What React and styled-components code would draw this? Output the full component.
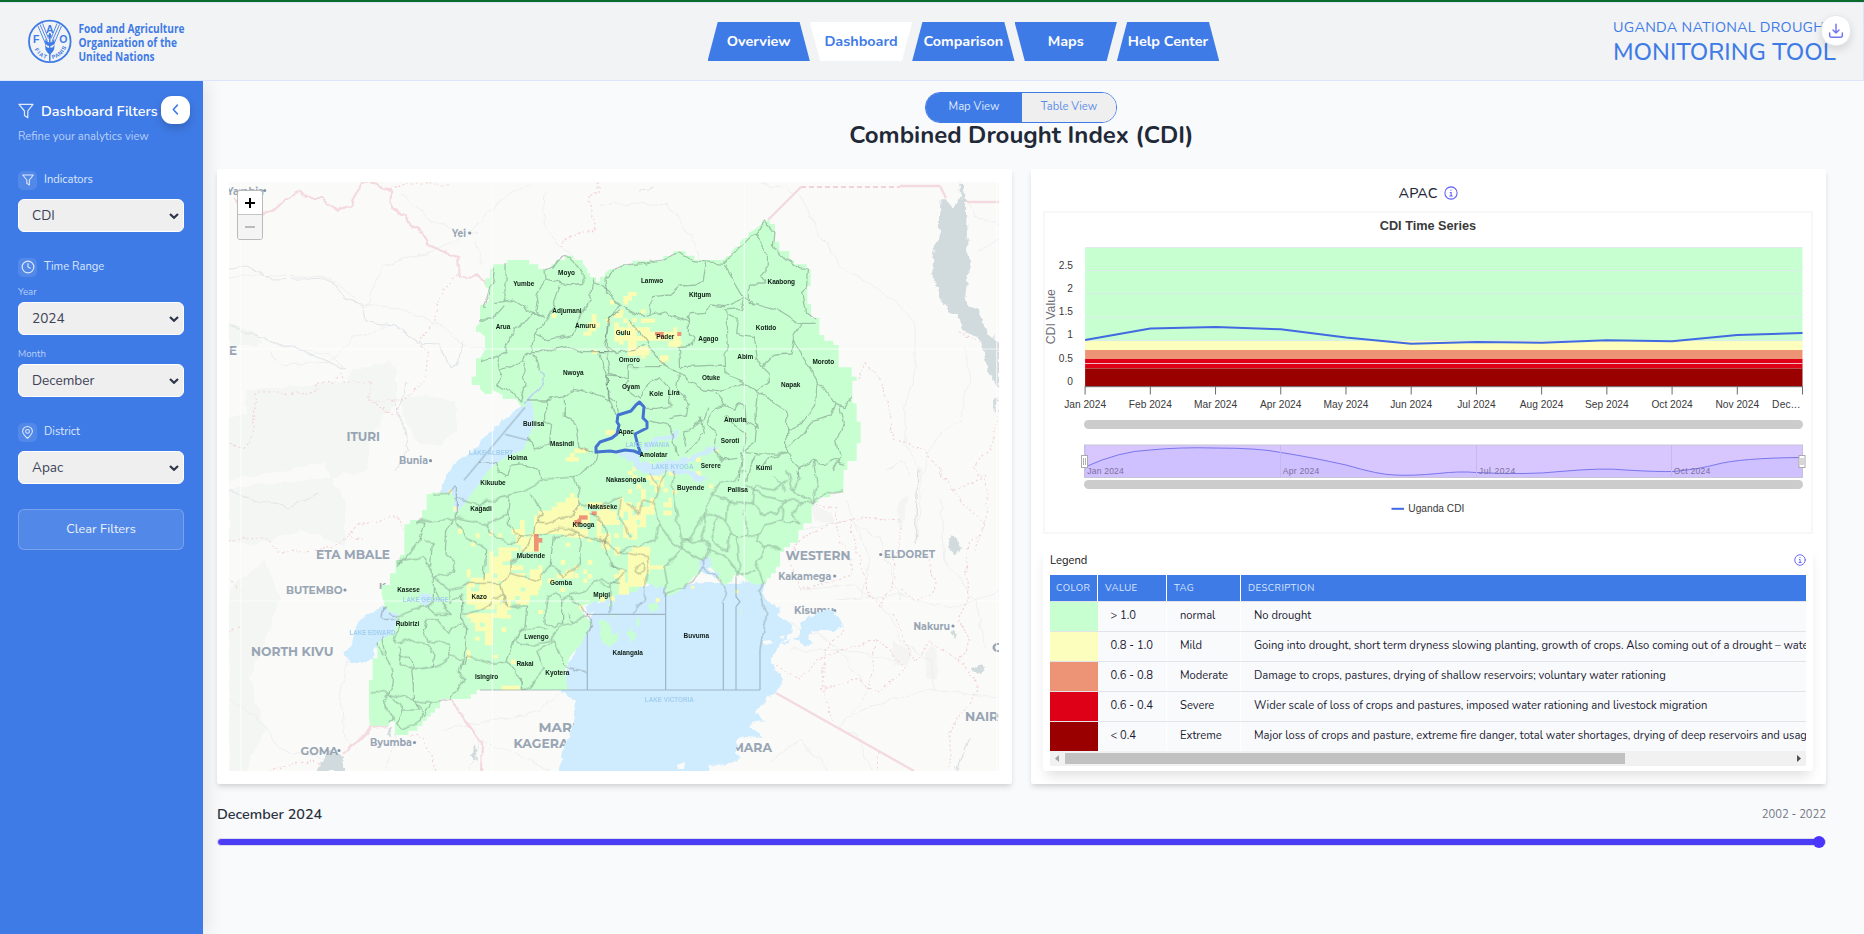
import React from "react";
import styled, { createGlobalStyle, css } from "styled-components";

const BLUE = "#3f7be6";
const UI = '"Nunito", "Lato", sans-serif';

const Global = createGlobalStyle`
  * { box-sizing: border-box; }
  body { margin: 0; background: #f9fafc; overflow: hidden; font-family: ${UI}; color: #1f2937; }
  button { font-family: inherit; border: 0; padding: 0; }
`;

const Page = styled.div`
  height: 934px;
  display: flex;
  flex-direction: column;
  border-top: 2px solid #0b6b2f;
`;

/* ---------- header ---------- */
const Header = styled.header`
  height: 79px;
  flex: none;
  display: flex;
  align-items: center;
  background: #f2f3f5;
  border: 1px solid #dbe5fb;
  border-left: 0;
  padding-left: 25px;
  position: relative;
`;
const Nav = styled.nav`
  display: flex;
  margin-left: 486.5px;
`;
const Tab = styled.button`
  width: 102.35px;
  height: 39px;
  padding-bottom: 2px;
  font-size: 14.4px;
  font-weight: 700;
  white-space: nowrap;
  color: ${(p) => (p.$active ? BLUE : "#fff")};
  background: ${(p) => (p.$active ? "#fff" : BLUE)};
  clip-path: ${(p) =>
    p.$flip
      ? "polygon(0 0, 100% 0, 90% 100%, 10% 100%)"
      : "polygon(10% 0, 90% 0, 100% 100%, 0 100%)"};
`;
const Brand = styled.div`
  margin-left: auto;
  width: 250px;
  color: ${BLUE};
  white-space: nowrap;
`;
const BrandSmall = styled.div`
  font-size: 14.4px;
  line-height: 20px;
  letter-spacing: 0.25px;
`;
const BrandBig = styled.div`
  font-size: 24px;
  line-height: 30px;
  font-weight: 540;
`;
const Download = styled.button`
  position: absolute;
  right: 12px;
  top: 12px;
  width: 30px;
  height: 31px;
  border-radius: 14px;
  border: 1px solid #e5e7eb;
  background: #fff;
  color: #7376f1;
  box-shadow: 0 4px 8px rgba(0, 0, 0, 0.12);
  display: grid;
  place-items: center;
`;

/* ---------- sidebar ---------- */
const Body = styled.div`
  flex: 1;
  display: flex;
  min-height: 0;
`;
const Sidebar = styled.aside`
  width: 203px;
  flex: none;
  background: ${BLUE};
  padding: 14px 19px 0 18px;
  color: #fff;
  box-shadow: 4px 0 18px rgba(0, 0, 0, 0.09);
`;
const SideHead = styled.div`
  display: flex;
  align-items: center;
  height: 29px;
  font-size: 14.4px;
  font-weight: 600;
  white-space: nowrap;
  margin-right: -6px;
  > svg { flex: none; margin: 3px 7px 0 0; opacity: 0.85; }
`;
const HeadText = styled.span`
  width: 120px;
  padding-top: 3px;
  letter-spacing: -0.02px;
`;
const Collapse = styled.button`
  width: 29px;
  height: 28px;
  flex: none;
  border-radius: 11px;
  background: #fff;
  color: ${BLUE};
  display: grid;
  place-items: center;
  box-shadow: 0 4px 8px rgba(0, 0, 0, 0.18);
`;
const SideSub = styled.div`
  font-size: 11.2px;
  line-height: 16px;
  margin-top: 5px;
  color: #b9d0f8;
`;
const Section = styled.div`
  display: flex;
  align-items: center;
  height: 20px;
  margin-top: ${(p) => p.$top}px;
  font-size: 11.2px;
  color: #dce8fd;
`;
const SectionText = styled.span`
  padding-bottom: 2px;
`;
const SectionIcon = styled.span`
  width: 19px;
  height: 19px;
  border-radius: 5px;
  background: rgba(255, 255, 255, 0.1);
  display: grid;
  place-items: center;
  margin-right: 7px;
`;
const FieldLabel = styled.div`
  font-size: 9.6px;
  line-height: 12px;
  margin-top: ${(p) => p.$top}px;
  color: #b9d0f8;
`;
const Select = styled.button`
  display: flex;
  align-items: center;
  justify-content: space-between;
  width: 166px;
  height: 33px;
  margin-top: ${(p) => p.$top}px;
  padding: 0 4px 0 13px;
  border: 1px solid #fff;
  border-radius: 6px;
  background: #efefef;
  color: #3b4256;
  font-size: 13.6px;
`;
const Clear = styled.button`
  display: block;
  width: 166px;
  height: 41px;
  margin-top: 25px;
  border-radius: 6px;
  border: 1px solid rgba(255, 255, 255, 0.22);
  background: rgba(255, 255, 255, 0.1);
  color: #edf3fe;
  font-size: 12.8px;
  padding-bottom: 1px;
`;

/* ---------- main ---------- */
const Main = styled.main`
  flex: 1;
  min-width: 0;
  padding: 11px 38px 0 14px;
`;
const Toggle = styled.div`
  display: flex;
  width: 192px;
  height: 31px;
  margin: 0 auto 0 708px;
  border: 1px solid ${BLUE};
  border-radius: 15px;
  overflow: hidden;
`;
const ToggleItem = styled.button`
  width: ${(p) => p.$w}px;
  font-size: 11.2px;
  padding-bottom: 3px;
  color: ${(p) => (p.$on ? "#dfe9fc" : "#5c8ee8")};
  background: ${(p) => (p.$on ? BLUE : "#efefef")};
`;
const Title = styled.h1`
  margin: -4px 0 0;
  text-align: center;
  font-size: 24px;
  line-height: 32px;
  font-weight: 700;
  color: #1f2937;
`;
const Cards = styled.div`
  display: flex;
  gap: 19px;
  margin-top: 18px;
`;
const Card = styled.section`
  width: 795px;
  height: 615px;
  background: #fff;
  border-radius: 2px;
  padding: 12px;
  box-shadow: 0 4px 6px -1px rgba(0, 0, 0, 0.13), 0 2px 4px -1px rgba(0, 0, 0, 0.06);
`;
const MapFrame = styled.div`
  width: 770px;
  height: 589px;
  margin-top: 1px;
  position: relative;
  svg.map { display: block; }
`;
const Zoom = styled.div`
  position: absolute;
  left: 8px;
  top: 8px;
  width: 26px;
  height: 50px;
  border: 1px solid #bababa;
  border-radius: 3px;
  overflow: hidden;
`;
const ZoomKey = styled.div`
  height: 24px;
  display: grid;
  place-items: center;
  background: ${(p) => (p.$off ? "#f4f4f4" : "#fff")};
  color: ${(p) => (p.$off ? "#bbb" : "#000")};
  ${(p) => !p.$off && css`border-bottom: 1px solid #c4c4c4;`}
`;
const PanelTitle = styled.div`
  height: 30px;
  display: flex;
  align-items: center;
  justify-content: center;
  gap: 7px;
  font-size: 14.4px;
  font-weight: 530;
  color: #1f2937;
  padding-bottom: 6px;
`;
const ChartBox = styled.div`
  width: 770px;
  height: 323px;
  border: 2px solid #f7f7f8;
  svg { display: block; margin: -2px; }
`;
const Legend = styled.div`
  width: 770px;
  height: 225px;
  margin-top: 12px;
  padding: 4px 7px 0;
  background: #fff;
  border-radius: 3px;
  box-shadow: 0 8px 12px -3px rgba(0, 0, 0, 0.12);
`;
const LegendHead = styled.div`
  height: 25px;
  display: flex;
  align-items: center;
  justify-content: space-between;
  padding-bottom: 5px;
  font-size: 11.2px;
  color: #111;
`;
const TableWrap = styled.div`
  width: 756px;
  overflow: hidden;
`;
const Row = styled.div`
  display: grid;
  grid-template-columns: 48px 69px 74px 565px;
  height: ${(p) => p.$h}px;
  border-bottom: ${(p) => (p.$last ? 0 : 1)}px solid #e2e4e8;
`;
const HeadCell = styled.div`
  background: ${BLUE};
  color: #d9e6fc;
  font-size: 9.6px;
  letter-spacing: 0.4px;
  display: flex;
  align-items: center;
  padding: 0 0 1px ${(p) => (p.$first ? 6 : 7)}px;
  border-right: ${(p) => (p.$end ? 0 : 1)}px solid #fff;
`;
const Cell = styled.div`
  background: #f9fafc;
  display: flex;
  align-items: center;
  padding: 0 0 2px ${(p) => p.$pad || 13}px;
  font-size: 11.2px;
  white-space: nowrap;
  color: #1b1b33;
  border-right: ${(p) => (p.$end ? 0 : 1)}px solid #fff;
`;
const Swatch = styled.div`
  background: ${(p) => p.$c};
`;
const Scroll = styled.div`
  height: 15px;
  background: #f1f1f1;
  display: flex;
  align-items: center;
  justify-content: space-between;
  padding: 0 5px;
`;
const Thumb = styled.div`
  width: 560px;
  height: 11px;
  background: #c1c1c1;
  margin: 0 auto 0 6px;
`;
const Timeline = styled.div`
  display: flex;
  justify-content: space-between;
  align-items: center;
  margin: 19px 0 0;
  height: 22px;
  font-size: 14.4px;
  font-weight: 600;
  color: #2a3240;
`;
const Range = styled.span`
  font-size: 11.2px;
  font-weight: 400;
  color: #6f7683;
`;
const Track = styled.div`
  margin: 13px 0 0;
  height: 8px;
  border: 1px solid #dcdce8;
  border-radius: 4px;
  background: #4a3df5;
  display: flex;
  align-items: center;
  justify-content: flex-end;
`;
const Knob = styled.div`
  width: 12px;
  height: 12px;
  flex: none;
  border-radius: 50%;
  background: #4a36ff;
`;

/* ---------- icons ---------- */
const Svg = ({ s = 16, w = 1.7, children, h }) => (
  <svg width={s} height={h || s} viewBox="0 0 24 24" fill="none" stroke="currentColor" strokeWidth={w} strokeLinecap="round" strokeLinejoin="round">
    {children}
  </svg>
);
const Funnel = ({ s, w }) => (
  <Svg s={s} w={w}><path d="M1.5 2h21l-7.8 10v10l-5-3.2V12z" /></Svg>
);
const Clock = () => (
  <Svg s={14} w={2}><circle cx="12" cy="12" r="10" /><path d="M12 6v6l4 2" /></Svg>
);
const Pin = () => (
  <Svg s={13} w={2}><path d="M12 23C7 18 3 14 3 10a9 9 0 0 1 18 0c0 4-4 8-9 13z" /><circle cx="12" cy="10" r="3.5" /></Svg>
);
const Info = ({ s = 14 }) => (
  <svg width={s} height={s} viewBox="0 0 24 24" fill="none" stroke="#5b5cf0" strokeWidth="1.8" strokeLinecap="round">
    <circle cx="12" cy="12" r="10.5" /><path d="M10.8 11h1.4v6M10 17h4.200M12 7v.4" />
  </svg>
);
const Chevron = () => (
  <svg width="10" height="6" viewBox="0 0 10 6" fill="none" stroke="#30364a" strokeWidth="2.2"><path d="M1 1l4 3.8L9 1" /></svg>
);

const Logo = () => (
  <svg width="196" height="50" viewBox="25 17 196 50" fill={BLUE}>
    <circle cx="49.8" cy="41.4" r="20.8" fill="none" stroke={BLUE} strokeWidth="1.8" />
    <g stroke={BLUE} strokeWidth="0.9" fill="none">
      <path d="M38 26l8 19M40 24.5l7.5 17M42.5 23.5l6 15M61.500 26l-8 19M59.500 24.500l-7.500 17M57 23.500l-6 15" />
      <path d="M49.800 33v28" strokeWidth="1.4" />
    </g>
    <path d="M49.800 33l2 3-2 2.500-2-2.500zM45.500 38.500q1 4 4.300 4t4.300-4l.5 4q-1.500 3.500-4.800 3.500t-4.800-3.500zM45 44.500q1.500 3.500 4.800 3.500t4.800-3.500l-.5 5q-1.300 3-4.300 5.500-3-2.500-4.300-5.500z" />
    <g fontFamily='"Liberation Sans", sans-serif' fontWeight="700" fontSize="10.500" textAnchor="middle">
      <text x="36.300" y="42.500">F</text><text x="49.800" y="32.500">A</text><text x="63.300" y="42.500">O</text>
    </g>
    <g fontFamily='"Liberation Sans", sans-serif' fontSize="5.500" fontWeight="700" textAnchor="middle">
      <text transform="translate(35.500 51) rotate(55)">F</text>
      <text transform="translate(37.500 53.800) rotate(46)">I</text>
      <text transform="translate(40.300 56.300) rotate(35)">A</text>
      <text transform="translate(44.300 58.300) rotate(20)">T</text>
      <text transform="translate(54.300 58.500) rotate(-17)">P</text>
      <text transform="translate(58 57) rotate(-30)">A</text>
      <text transform="translate(61.500 54.500) rotate(-42)">N</text>
      <text transform="translate(63.800 51.800) rotate(-52)">I</text>
      <text transform="translate(65.500 49) rotate(-62)">S</text>
    </g>
    <g fontFamily='"Open Sans", "Noto Sans", sans-serif' fontWeight="700" fontSize="12.200">
      <text x="78.500" y="33" textLength="106" lengthAdjust="spacingAndGlyphs">Food and Agriculture</text>
      <text x="78.500" y="47" textLength="98.500" lengthAdjust="spacingAndGlyphs">Organization of the</text>
      <text x="78.500" y="61" textLength="76" lengthAdjust="spacingAndGlyphs">United Nations</text>
    </g>
  </svg>
);

/* ---------- chart ---------- */
const X0 = 1085.1, DX = 65.22;
const months = ["Jan", "Feb", "Mar", "Apr", "May", "Jun", "Jul", "Aug", "Sep", "Oct", "Nov"];
const cdi = [340, 328.5, 327, 329.3, 337.6, 343.7, 342, 342.7, 340.3, 341.3, 335, 333.1];
const linePts = cdi.map((y, i) => `${X0 + i * DX},${y}`).join(" ");
const bands = [["#c7ffd1", 247.5, 341], ["#fbfebd", 341, 350], ["#ee9476", 350, 359], ["#de0017", 359, 368.500], ["#9a0000", 368.500, 386.500]];
const trend = "M1085 467Q1120 451 1150 450Q1180 447 1215 448Q1260 448 1281 452.500Q1310 457 1346 465Q1380 475 1395 475Q1412 476 1438 473.500Q1460 471 1476 472.500Q1530 475 1560 471.500Q1605 467.500 1625 470Q1660 472 1673 471.500Q1700 469 1716 464.500Q1740 458 1802 457.500";

const Chart = () => (
  <svg width="770" height="323" viewBox="1043 211 770 323" fontFamily='"Liberation Sans", Arial, sans-serif' fontSize="10.200" fill="#3a3a3a">
    <text x="1428" y="230" textAnchor="middle" fontSize="12.700" fontWeight="700">CDI Time Series</text>
    {bands.map(([c, a, b]) => <rect key={c} x={X0} width="717.400" y={a} height={b - a} fill={c} />)}
    {[247.5, 270.5, 293.7, 317.2, 340.5].map((y) => <path key={y} d={`M${X0} ${y}H1802.500`} stroke="#e0e6f1" strokeOpacity=".75" />)}
    <path d="M1085 363.500H1802.500" stroke="#f3b9c0" />
    <path d="M1085 368.500H1802.500" stroke="#b4504c" />
    <path d="M1085 386.700H1802.500" stroke="#6b6b70" />
    {Array.from({ length: 12 }, (_, i) => <path key={i} d={`M${X0 + i * DX} 386v8.500`} stroke="#6b6b70" />)}
    {["2.5", "2", "1.5", "1", "0.5", "0"].map((t, i) => <text key={t} x="1073" y={268.800 + i * 23.200} textAnchor="end">{t}</text>)}
    {months.map((m, i) => <text key={m} x={X0 + i * DX} y="407.700" textAnchor="middle">{m} 2024</text>)}
    <text x="1772" y="407.700" textLength="28">Dec...</text>
    <text transform="translate(1054.800 316.700) rotate(-90)" textAnchor="middle" fontSize="12.300" fill="#6e7079">CDI Value</text>
    <polyline points={linePts} fill="none" stroke="#4169e1" strokeWidth="2" strokeLinejoin="round" />
    <rect x="1084" y="420" width="719" height="9" rx="4.500" fill="#ccc" />
    <rect x="1084.500" y="445" width="718" height="32.500" fill="#d8c7ff" stroke="#c8c3d6" />
    <path d={trend + "V477H1085Z"} fill="#b9aeff" fillOpacity=".3" />
    <path d={trend} fill="none" stroke="#7a76ee" />
    {[["Jan", 1085], ["Apr", 1280.500], ["Jul", 1476.500], ["Oct", 1671.500]].map(([m, x]) => (
      <g key={m}>
        <path d={`M${x} 445v32`} stroke="#c6b8ec" />
        <text x={x + 2.300} y="474" fontSize="8.600" fill="#7d6f9c" textLength="36.500">{m} 2024</text>
      </g>
    ))}
    {[1084.500, 1802].map((x) => (
      <g key={x}>
        <rect x={x - 3} y="455.500" width="6" height="12" fill="#fff" stroke="#aaa" />
        <path d={`M${x - 1} 458v7M${x + 1} 458v7`} stroke="#999" strokeWidth=".8" />
      </g>
    ))}
    <rect x="1084" y="480" width="719" height="9" rx="4.500" fill="#ccc" />
    <path d="M1391.500 508.800h12.500" stroke="#4169e1" strokeWidth="2" />
    <text x="1408.300" y="512" fontSize="10.200">Uganda CDI</text>
  </svg>
);

/* ---------- map ----------
   Each quarter of the map is drawn in its own grid of thirds of a pixel. */
const Q = ({ x, y, children, ...rest }) => <g transform={`translate(${x} ${y}) scale(.33333)`} {...rest}>{children}</g>;

const greens = [
  [220, 170, "M1200 297L1170 297V310H1156V335H1128V322H1110V310H1102V297L1088 283V270H1060V257H1035V270H1008V283H995V297H955V283H928V270H862V283H820V297H810V325H796V350L806 356V395L790 405H780V458L768 470V485H778L795 500V540L780 565H768V620H755V645H780V658L796 672H818V660L848 675V687H888L900 705L915 712L925 690L935 700L941 730V770L925 800L918 820L910 840L870 855L830 880L800 905L792 930H1200Z"],
  [600, 170, "M0 320H15V310L30 298H60V285H97V272H190V258H220V244H257V257H283V270H370L382 258H395V243L408 230H420V215L433 203H445V190L465 178L485 163V152H510V162H525V215H538V243H568V270H582V283H620V297H632V348H622V402H633V443H658V495H673V512H700V525H716V592H755V620H770V632H757V700H770V755H782V820H770V873H742V900H730V932H0Z"],
  [220, 470, "M815 0L790 20L775 45L755 70L735 100L712 125H700V110L705 85L690 68H635V72H620V120H606V150H570V163H553V255H540V270H527V310H510V345H485V372L495 410L510 425L535 432L530 460L520 490L490 505L472 520V565H458V630H447V740L450 767H508V755H525V795H565V782H592V768H607V752H620V740H632V728H645V715H660V687H752V673H770V660H1043L1035 600L1050 560L1085 520L1110 470L1115 455L1095 440L1085 420L1090 405L1120 400L1170 385L1200 372V-4H815Z"],
  [600, 470, "M0 -4H730V68H690V82H655V97H640V110H635V160H610V180H595V218H570V232H552V245H540V290H527V310H513V325H500V338L470 345L445 335L425 315H402L395 335L370 345L340 300L330 290L312 300L285 318L240 362L210 378L197 372L195 350L170 362L160 345L140 340L125 345L110 365L60 370L30 385L0 400Z"],
];
const borders = [
  [220, 170, "M858 283V390L850 398L820 400M975 298L978 330L955 370L948 425L972 440M978 300L1000 290L1020 262L1050 265L1090 310L1088 340L1050 345L1020 340L978 330M820 290L815 340L805 380L790 410M850 398L880 390L910 408L920 425L970 438M780 450L815 450L850 410M940 430L920 455L885 470L880 490L860 520L855 545L830 560L780 575M1020 350L1000 410L980 445L945 490L935 510L932 545L970 545L1040 530L1085 545L1160 545M945 490L985 512L1060 492L1085 440L1112 385L1118 325M1118 335L1150 345L1170 370L1200 400M1200 425L1170 440L1165 490L1155 530L1165 545M932 545L905 570L875 590L835 600L830 560M835 600L850 620L835 650L880 670L905 700M935 550L955 580L958 600M912 570L908 600L915 640L905 700M1140 550L1150 590L1165 615L1200 620M1165 615V680L1190 700L1195 730M925 690L975 690L1035 680L1060 655L1120 665L1170 690M977 690V750L995 765L988 820L940 840L925 800M1033 675V745L1070 765L1080 830L1128 852M780 877L830 880L835 905L860 915L870 890L900 885L930 890L960 900L965 930M1128 852L1120 880L1090 900L1060 925"],
  [600, 170, "M15 320L75 285L130 280L185 270L240 245L280 272L370 280L465 188L495 155M15 320L20 370L60 405L130 440L155 435L205 425L225 440L265 455L270 435L310 430L325 405L380 410L430 385L370 285M320 280L310 330L290 345L240 348L210 375L158 380L150 435M465 188L500 250L498 300L480 320L495 345H448V400L475 402M430 385L475 405L545 425L600 460H650M495 155L525 190L520 230L545 260L570 275L590 290L622 300L620 345L608 370L620 430L645 450M430 390L425 415L380 420L385 530L375 560L378 615L430 635M60 405L25 450L22 530L50 548L138 530M90 448L182 575L245 610M265 440V490L285 500L280 525L238 530L242 590L378 585M385 440L415 448L410 490L460 500L470 570L505 605V640L465 660L430 635M490 585L520 555L570 552L580 508L605 460M580 510L610 560L655 635L650 700L605 760L560 780V720L430 640M655 640L680 660L705 700L735 710L755 680M705 700L690 740L630 760L600 800L560 830V780M720 710L730 760L710 810L720 860L700 900M560 830V850L475 848L430 845M425 850L420 900L418 930M475 848L450 890L440 930M0 545H50M20 550L30 610L85 630L85 590H182M23 615L28 690L50 740M85 630L75 650L120 685L145 640L180 620M182 580L240 605L270 635L310 660L360 665L430 640M180 620L205 650L210 710L170 715L132 715M235 610L230 650L265 700L260 735L205 740M350 670L375 700L345 710L320 760L350 790L345 840M320 710L310 750L255 790L250 830M375 700L400 725L415 700L435 710L438 755L470 770L465 820L430 845L440 790L405 770L375 740M475 670L468 730L475 780M145 750L200 760L220 800L230 860M300 740L310 790L260 850M345 840L370 870L415 865M480 900L510 860L560 850L600 890L590 930M600 890L640 870L670 890L700 870L735 880M640 870L650 930"],
  [220, 470, "M712 50V145L600 155L590 165M712 50L680 70L640 72M712 80L780 110L800 90L862 80M712 145L800 165L860 135L865 75L910 65L975 30L1060 25L1075 50L1080 100M865 130V160L890 190L945 200M930 70L970 130L945 160L940 200M800 165L820 200L890 220L905 190M700 145L680 190L675 250L710 280L700 310L640 320M710 150L740 200L780 225L800 240L795 330M590 160L615 160L600 210L550 270L530 280M550 270L610 262L640 300V400L620 412M610 210L640 215L635 290M640 320L690 360L730 350L740 340H845M640 350L660 390L690 430L640 430L620 412L580 420L530 440L510 430M690 360L690 400L725 370V450L740 480L730 590M730 430L790 420L820 400V385L850 380L860 405M940 200L905 250L870 280V310L840 345L850 395L860 405L920 415L915 470L880 510L860 575L820 580L740 560L735 590M870 310L950 330L990 290L1000 200L1080 190M945 155L1000 160L1060 130L1080 100L1110 110L1200 85M950 195L1030 170L1080 190V230L1085 280L1030 320L990 290M1080 200L1160 210L1155 260L1200 300M1110 130L1150 160L1160 210M990 380L978 400V460L1000 475L1025 460V390L1005 372L990 380M1050 375L1100 360L1145 330L1200 340M1025 390L1050 380L1090 420L1100 433M1025 465L1060 460L1100 435L1118 470L1102 490M880 510L930 525L990 510L1025 470M880 510L910 480L980 475M950 545L1000 510L1020 550L1035 585L1100 610M950 545L970 600L930 650L905 660L900 620L860 575M482 448H535L540 470L520 500L530 520M485 500L495 550L520 610L510 670L455 662M470 520L490 550M530 520L570 510L620 520L645 550L640 590L580 600L575 560L545 555L540 530M545 555L540 580L575 600L580 640L580 690L510 670M575 600L650 590L690 560L685 520L620 510L610 480L620 450L650 445L690 490L725 460M690 560L730 570L720 610L735 630L700 670L690 690L630 700L610 740M510 670L550 720L600 720L580 690M510 670L490 700L520 745L510 760M550 720L530 760L545 780L600 755L610 720L580 690L630 700M490 420L495 410M482 448L490 410M553 265L530 290M904 660V620M1060 460L1040 430"],
  [600, 470, "M200 0L180 40L165 100L175 160L165 210L55 245M150 10L175 60M225 0L215 50L225 110L245 210L265 210L320 125L330 70L360 40L400 30L435 0M320 125L310 180L300 210L245 215M320 125L350 145L380 155L385 90L400 95L330 70M350 145L335 210L380 245L385 190L380 155M400 95L460 100L465 50L520 60L560 30M435 40L460 60L500 80L545 90L600 95L640 98L650 30M460 100L480 130L530 130L560 90M435 100L440 200L410 200L385 190M440 200L475 190L500 165L545 150L550 110M475 190L470 215L495 235H540M550 155L600 160L575 130L600 95M495 235L470 280L490 340L478 365L497 430L480 540M408 200L415 240L420 300L408 320M245 215L250 240L210 280L195 290L205 340L190 365L197 375L250 355L308 298L340 310L375 350L370 400M308 298V270L335 230L300 210M308 270L250 240L225 225L175 160M97 430L130 390L132 340L145 300L142 260L55 245L0 200M60 90L55 130L90 200M80 100L115 130L125 90L170 100M30 280L75 300L60 330L30 340V432M0 340L30 350M110 290L125 285L135 300L125 315L105 305ZM560 0L575 60L640 95L655 80L730 60M590 0L600 30L575 60M560 60L520 20M330 240L380 260L420 310L470 305"],
];
/* boundaries that run over open water are ruled straight */
const lakeBorders = [
  [220, 170, "M855 793L930 812M915 712L732 930"],
  [220, 470, "M1100 433H1140M1102 490V660M780 660H1140"],
  [600, 470, "M0 433H197M197 375V660M370 400V660M408 320V380L420 395L408 410V660M480 540V660M0 660H480"],
];
const yellow = [
  [220, 170, "995,430,14,14 1115,432,14,28 1103,458,26,26 1090,485,25,12 1128,458,12,14 1115,540,16,12 1170,390,12,12 1158,444,10,14 1183,430,17,14 1183,458,14,12 1183,485,17,30 1158,780,26,15 1063,835,40,14 1050,849,14,26 1037,862,14,12 1063,862,14,12"],
  [600, 170, "84,366,26,12 70,378,26,14 70,390,14,14 30,392,13,12 57,418,14,12 43,430,26,14 20,445,12,14 70,445,13,14 97,444,13,12 84,458,14,12 123,418,14,12 123,446,42,13 43,458,14,14 43,472,100,40 57,512,14,12 84,498,26,60 98,485,95,27 110,530,38,26 123,556,14,10 138,472,12,40 165,485,60,25 190,498,52,14 220,472,12,60 205,512,40,18 180,556,26,18 180,570,12,10 43,472,26,14 17,780,25,14 97,890,12,14 84,903,14,12 288,862,14,14 288,903,14,14 138,876,16,10 205,903,20,14 138,916,50,14 260,862,18,12 345,835,10,12"],
  [220, 470, "1050,70,14,25 1037,83,40,28 1010,97,67,14 995,110,95,40 955,122,130,30 942,136,110,56 900,150,14,44 875,177,40,16 888,190,60,35 1030,150,50,50 1070,122,40,40 1100,97,50,14 1130,122,60,42 1145,110,24,14 1158,150,42,14 1130,164,14,44 1145,205,26,30 1158,190,14,40 1183,230,17,26 1050,177,54,26 902,220,58,25 835,232,60,12 835,244,40,30 820,260,50,12 808,272,40,26 820,286,90,14 808,298,65,34 795,310,40,28 740,298,12,25 752,323,60,16 740,338,100,66 780,325,25,12 845,286,28,160 840,345,90,46 860,310,100,50 900,340,55,36 885,325,50,14 930,298,36,50 888,390,40,14 765,404,60,14 740,430,115,14 752,430,55,28 765,444,55,40 830,404,28,40 795,484,24,42 765,500,14,12 845,472,14,14 740,541,12,26 820,555,14,10 873,568,14,14 845,647,55,13 835,190,10,14 714,177,12,14 767,190,12,14 808,183,10,14 753,218,12,12 808,244,12,50 955,286,12,14 983,325,20,14 1010,312,50,14 1037,298,26,14 1063,310,12,14 1090,298,12,14 1063,286,14,12 1103,270,14,14 1103,312,14,14 1037,218,14,12 1077,192,14,14 1090,325,12,14 1022,270,14,14 1022,352,14,14 955,420,14,12 1170,380,14,14 1078,405,10,14 700,110,10,12 688,58,8,12 1103,205,14,10"],
  [600, 470, "57,83,14,60 70,97,26,28 84,122,54,50 97,110,66,24 110,97,14,14 123,57,14,40 150,15,14,30 164,40,14,28 177,26,14,26 190,55,14,12 150,83,14,50 97,15,14,12 84,57,12,14 110,43,14,14 0,122,14,42 14,150,44,14 0,190,30,28 14,205,16,36 70,150,40,54 70,177,14,26 84,164,28,45 84,244,66,56 97,230,54,20 138,260,12,50 150,286,40,12 110,298,28,40 97,310,40,35 84,300,40,50 43,312,14,14 57,298,18,50 57,338,40,12 123,338,10,12 43,190,14,14 0,380,14,16 30,380,14,14 190,97,24,14 205,83,10,30 190,122,26,14 218,60,14,12 273,15,28,10 180,0,14,12 327,43,12,12 273,348,10,8 167,384,12,12 405,360,10,10 57,350,30,24"],
];
const holes = [
  [600, 170, "57,485,14,13 110,485,14,13 150,458,14,27 205,498,14,14"],
  [220, 470, "752,352,26,12 765,340,14,10 885,378,14,12 915,190,14,12 820,310,12,14 862,420,12,14 902,352,14,12 915,312,14,14 780,458,14,12 875,244,12,14"],
  [600, 470, "97,122,12,14 84,190,14,12 110,150,10,14"],
];
const orange = [
  [600, 170, "165,486,26,10 177,496,14,6 232,486,12,12"],
  [220, 470, "942,192,14,52 955,204,12,14 1077,136,26,13 1063,150,14,14 1115,124,15,11 1072,146,12,16"],
];
const cells = (groups, fill) => groups.map(([x, y, list]) => (
  <Q key={x + "-" + y} x={x} y={y} fill={fill}>
    {list.split(" ").map((r, i) => {
      const [a, b, w, h] = r.split(",");
      return <rect key={i} x={a} y={b} width={w} height={h} />;
    })}
  </Q>
));

const districts = [
  ["Yumbe", 523.7, 284], ["Moyo", 566.500, 273], ["Adjumani", 567, 311], ["Arua", 503, 327], ["Amuru", 585.300, 326],
  ["Nwoya", 573.300, 373], ["Buliisa", 533.500, 424], ["Masindi", 562, 444], ["Hoima", 517.500, 458],
  ["Lamwo", 652, 281], ["Kitgum", 700, 295], ["Kaabong", 781.300, 282], ["Kotido", 766, 328], ["Agago", 708.300, 339],
  ["Gulu", 623, 333], ["Pader", 665.300, 337], ["Abim", 745.300, 357], ["Moroto", 823.300, 362], ["Omoro", 629.300, 360],
  ["Otuke", 711, 378], ["Napak", 790.700, 385], ["Oyam", 631, 387], ["Kole", 656.300, 394], ["Lira", 673.700, 393],
  ["Amuria", 735, 420], ["Apac", 626, 432], ["Soroti", 730, 441], ["Amolatar", 653.500, 455], ["Serere", 710.700, 466],
  ["Kumi", 764, 468], ["Nakasongola", 626, 479.500], ["Buyende", 690.700, 487.500], ["Pallisa", 737.700, 489.500],
  ["Kikuube", 493, 482.500], ["Kagadi", 481, 508.500], ["Nakaseke", 602.500, 506.500], ["Kiboga", 583.500, 524.500], ["Mubende", 531, 555.500],
  ["Gomba", 561, 582.500], ["Kazo", 479.300, 596.500], ["Mpigi", 601.700, 594.500], ["Kasese", 408.500, 589.500], ["Rubirizi", 407.500, 623.500],
  ["Lwengo", 536.500, 636.500], ["Rakai", 525, 663.500], ["Kyotera", 557.300, 672.500], ["Isingiro", 486.500, 676.500],
  ["Kalangala", 627.700, 652.500], ["Buvuma", 696.300, 635.500],
];
const places = [
  ["ITURI", 346.500, 441, 33.500, 12.500], ["Bunia", 399, 464.300, 29, 10], ["Yei", 452, 236.500, 14, 10], ["ETA MBALE", 316, 558.500, 74, 12.500],
  ["BUTEMBO", 286, 593.500, 56.500, 10.500], ["NORTH KIVU", 251, 656, 82.500, 12.500], ["GOMA", 300.500, 754.500, 37.500, 10.500], ["Byumba", 370, 746, 42, 10],
  ["WESTERN", 785.500, 560, 65, 12.500], ["ELDORET", 884, 558.300, 51, 10.500], ["Kakamega", 778.300, 579.500, 53, 10],
  ["Kisumu", 794, 613.500, 40, 10], ["Nakuru", 913.500, 629.500, 36.500, 10], ["NAIRO", 965, 720.500, 44, 12.500], ["CE", 992, 651.500, 20, 12],
  ["MARA", 732, 752, 40, 12], ["MARI", 538.500, 731.500, 38, 12], ["KAGERA", 513.500, 747.700, 55, 12], ["E", 229, 354.500, 8, 12], ["Yarabia", 227, 194.500, 37, 10], ["K", 379, 588.500, 7, 9],
];
const dots = [[469.700, 233], [430.500, 460.700], [345, 590], [339, 750.500], [414.500, 742.500], [880.700, 554.500], [834.700, 576], [834.700, 610.500], [953, 626], [264.700, 190.500]];
const lakes = [["LAKE ALBERT", 491, 455.300, 44], ["LAKE KWANIA", 647.500, 447, 44], ["LAKE KYOGA", 672.500, 469, 42], ["LAKE GEORGE", 425.700, 602, 46], ["LAKE EDWARD", 372.500, 635, 46], ["LAKE VICTORIA", 669.300, 702, 49]];

const MapArt = () => (
  <svg className="map" width="770" height="589" viewBox="229 182 770 589">
    <defs>
      <filter id="meander" filterUnits="userSpaceOnUse" x="220" y="170" width="790" height="610">
        <feTurbulence type="fractalNoise" baseFrequency="0.08" numOctaves="2" seed="4" />
        <feDisplacementMap in="SourceGraphic" scale="8" xChannelSelector="R" yChannelSelector="G" />
      </filter>
      <filter id="shore" filterUnits="userSpaceOnUse" x="220" y="170" width="790" height="610">
        <feTurbulence type="fractalNoise" baseFrequency="0.14" numOctaves="3" seed="9" />
        <feDisplacementMap in="SourceGraphic" scale="7" xChannelSelector="R" yChannelSelector="G" />
      </filter>
    </defs>
    <rect x="229" y="182" width="770" height="589" fill="#fafaf8" />
    <g filter="url(#meander)">
      <g fill="#f3f6f2">
        <path d="M246 390L350 382L350 372L390 361L396 372V400L368 440V470L330 478L326 462L229 480V418L246 415ZM229 322L250 330L262 345L229 345ZM400 400L420 395L455 402L456 430L440 445L415 440L405 420Z" />
        <path d="M229 488L330 478L345 500V545L300 530L255 545L229 540ZM229 590L265 560L280 600L250 680L265 730L245 771H229Z" />
      </g>
      <g fill="#f4f4f2"><path d="M893 640L912 650L908 668L893 664ZM925 652L935 645L938 680L926 678ZM810 500L830 512L835 524L815 520ZM900 500L908 495L902 528L897 524Z" /></g>
      <g fill="none" stroke="#eeefef" strokeWidth="1">
        <path d="M229 278L250 275L300 277L330 276L340 284L358 303L395 308L440 325L460 342L490 352M382 266L366 308M382 266L430 252L470 232L500 200L530 185M229 325L280 345L330 355L345 368M270 350L280 365L330 362L352 338L390 325M400 195L440 225L480 235M545 190L543 225L565 250L585 268M475 240L480 265M600 205L640 203L668 205L690 235L700 260M760 182L800 195L820 235L840 265L895 300L915 325L915 370L905 410L905 445L920 470L920 510L915 545M960 182L975 215L999 225M999 240L980 250M965 345L970 370L960 420L935 440L920 480M885 470L900 460L910 475M385 770L400 720L410 640L395 600L360 620L340 690L345 740L355 750M229 700L260 720L280 750L340 760M440 730L500 720L540 710L560 692M470 771L480 740L530 760L550 771M870 771L860 740L840 725L870 705L930 690L999 697M835 600L900 595L950 610L999 590M780 620L830 640L870 690L850 715M800 590L850 585L880 600L900 640L930 660L935 690M760 560L800 530L850 520L880 540L900 600M845 500L870 560L860 600M790 650L840 650L900 660M940 500L945 560L975 600L985 650M770 760L800 740L830 771" />
      </g>
      <g fill="none" stroke="#e2e6ea" strokeWidth="1.200">
        <path d="M229 268L250 267L272 280L330 278L345 297L364 306L366 322L395 325L418 343L440 344L450 368L460 360L463 340M229 323L245 333L300 350L330 362L347 370M407 382L405 395L396 410L405 430L408 450L395 470M229 490L260 502L290 507L320 492M640 190L655 188" />
        <path d="M955 771L970 740M918 470L915 545" stroke="#dcdfe1" />
      </g>
      <g fill="none" stroke="#f4dade" strokeWidth="2.200" strokeLinejoin="round">
        <path d="M233 198L245 213L270 214L285 200L298 192L305 198L322 198L338 211L350 205L362 182L380 185L392 192L391 208L404 216L410 225L423 232L428 245L458 257L460 278L475 275L485 286M344 753L365 735L370 727L388 725M450 698L465 720L482 742L481 771" />
      </g>
      <g fill="none" stroke="#f2d3d8" strokeWidth="1.200" strokeDasharray="2 2.500">
        <path d="M390 190L405 184L450 184M599 182V193L588 196L595 230L565 238L562 248M457 277L442 290L435 320L420 340L428 355L425 380L405 400L390 400L370 402V382L345 382L341 372L333 384L316 383L317 392L297 394L280 393L256 393L252 440L242 448L229 444M390 400L400 416L386 412L372 402" />
        <path d="M229 540L265 538L280 552L320 550L345 540L355 525L385 520L400 518L403 530M355 525L350 535L365 540M229 580L240 590M240 628L229 630M858 380L865 363L875 370L885 390L895 440L905 442L925 450L945 480M999 410L990 450L975 465L980 478L988 476M958 334L975 340L990 345M808 500L835 510L840 540L850 560L852 575L800 590L790 560L800 540L830 525L860 517L900 520L900 545L892 560L895 580L880 605L870 595L860 560L850 520M940 470L960 500L985 525L970 545L965 575L970 595L958 620L970 640L960 660L975 680L978 690L950 730L950 771M820 688L860 680L878 693L905 670L890 650L875 640L870 690M845 630L825 650L823 688L832 722M950 490L985 480L988 510L975 550M775 665L800 680L815 662L840 650L878 640M893 615L905 640L915 662L930 642L960 660M930 560L935 590L915 600L900 590M880 753L877 771M410 735L425 740L435 771M270 771L310 760L325 765" />
      </g>
    </g>
    <path d="M768 220L801 187M940 186L946 198M967 202H999M776 693L914 771M900 186H940" fill="none" stroke="#f4dade" strokeWidth="2.300" />
    <path d="M801 187H900" stroke="#f3d3d8" strokeWidth="2" strokeDasharray="5 3" />
    <g fill="#d1dadc" filter="url(#shore)">
      <path d="M942 198L953 208L961 195L958 184L964 184L963 197L966 202L966 218L968 232L967 250L970 262L967 280L965 298L970 307L977 309L982 320L988 332L999 343V388L995 384L988 370L983 350L977 337L961 330L958 315L950 312L940 300L940 288L936 287L932 275L933 262L935 245L940 232L940 215Z" />
      <path d="M993 400L998 397L994 415ZM948 540L953 535L961 547L957 554L948 548ZM972 670L980 664L985 670L978 675ZM317 771L325 755L330 750L344 757L343 771ZM387 730L392 726L390 738ZM955 629L957 638L951 634ZM470 755L475 745L477 760ZM952 570L955 582" />
    </g>

    <g fontFamily='"Montserrat", "Lato", sans-serif' fontWeight="700" fill="#98a5b4">
      {places.map(([t, x, y, w, f]) => <text key={t + x} x={x} y={y} fontSize={f} textLength={w} lengthAdjust="spacingAndGlyphs">{t}</text>)}
    </g>
    <g fill="#8795a5">
      {dots.map(([x, y]) => <circle key={x + "-" + y} cx={x} cy={y} r="1.600" />)}
    </g>

    <g fill="#cfecff" filter="url(#shore)">
      <path d="M530 400L513 412L490 432L473 450L453 465L442 485L441 495L450 492L457 512L470 510L500 480L540 440L545 400Z" />
      <path d="M384 606L400 614L404 628L394 640L374 650L373 658L368 662L350 662L345 653L352 645L355 628L365 616Z" />
      <path d="M560 690V683L592 615L615 585L765 582L763 593L770 603L780 608L778 615L790 623L793 631L786 637L780 646L795 640L802 632L800 623L816 613L828 609L837 615L843 627L833 632L812 630L808 637L812 642L805 648L799 641L786 641L777 648L771 660L775 670L783 678L778 690L766 700L756 713L765 722L752 720L750 727L762 737L745 736L737 741L736 752L740 757L728 764L710 765L706 778H559L562 752L568 740L575 715V702L568 695Z" />
    </g>
    <g fill="#fafaf8"><path d="M762 641L770 640L773 643L765 645ZM677 765L685 762L684 769L678 769ZM779 637L785 635L783 639Z" /></g>
    {greens.map(([x, y, d]) => <Q key={x + "-" + y} x={x} y={y} fill="#c7ffd1"><path d={d} /></Q>)}
    <g fill="#c7ffd1" filter="url(#shore)">
      <path d="M600 620L608 622L612 635L620 632L616 642L608 648L601 640ZM611 615H616V619ZM628 633L633 628L636 635L630 642ZM648 606L658 602L660 610L650 611ZM738 608L742 612L740 614ZM605 605L614 602L612 606L604 607ZM637 618L641 622L638 626Z" />
    </g>
    {cells(yellow, "#fbfdb4")}
    {cells(holes, "#c7ffd1")}
    {cells(orange, "#ee9476")}
    <g fill="#cfecff" filter="url(#shore)">
      <path d="M616 454L632 449L640 453L640 462L660 463L670 460L685 458L690 462L680 466L700 474L708 478L702 484L690 478L682 474L668 472L655 477L640 471L630 462Z" />
      <path d="M640 448L655 438L670 436L675 428L680 430L676 438L660 441L645 452ZM680 460L700 452L716 444L718 449L700 456L685 466ZM420 594L430 594L430 606L424 607L420 600ZM700 560L708 556L712 562L708 570L722 574L716 578L698 570ZM650 588L662 586L664 592L648 594ZM525 404L527 398L533 392L530 400ZM585 606L600 603L615 600L600 612L588 613Z" />
    </g>
    <path d="M539 371L544 378L541 388L532 396L525 404" fill="none" stroke="#b9d3e8" strokeWidth="1.600" filter="url(#meander)" />
    <g filter="url(#meander)">
      {borders.map(([x, y, d]) => (
        <Q key={x + "-" + y} x={x} y={y} fill="none" stroke="#5c6a66" strokeOpacity=".4" strokeWidth="3.800" strokeLinejoin="round"><path d={d} /></Q>
      ))}
    </g>
    {lakeBorders.map(([x, y, d]) => (
      <Q key={x + "-" + y} x={x} y={y} fill="none" stroke="#5c6a76" strokeOpacity=".42" strokeWidth="3.600"><path d={d} /></Q>
    ))}
    <g stroke="#fff" strokeOpacity=".7" strokeWidth="1.200">
      <path d="M240.700 182V771M492.300 182V771M744.300 182V583M996.700 182V771M229 349H999M229 601H590M770 601H999" />
    </g>
    <path d="M639.500 402L644 407L643 418L647 422L647 428L635 434L638 446L641 454L634 451L625 450L616 452L610 451L596 452L596 447L600 442L612 438L617 434L619 425L617 422L618 415L631 411L636 405Z" fill="none" stroke="#4473d0" strokeWidth="3" strokeLinejoin="round" />
    <g fontFamily='"Liberation Sans", Arial, sans-serif' fontSize="6.500" fill="#a3cfee" fontWeight="700" textAnchor="middle">
      {lakes.map(([t, x, y, w]) => <text key={t} x={x} y={y} textLength={w} lengthAdjust="spacingAndGlyphs">{t}</text>)}
    </g>
    <g fontFamily='"Liberation Sans", Arial, sans-serif' fontSize="6.450" fontWeight="700" fill="#0d1a12" textAnchor="middle">
      {districts.map(([t, x, y]) => <text key={t} x={x} y={y + 2.200}>{t}</text>)}
    </g>
  </svg>
);

const rows = [
  ["#c7ffd1", "> 1.0", "normal", "No drought", 30],
  ["#fbfebd", "0.8 - 1.0", "Mild", "Going into drought, short term dryness slowing planting, growth of crops. Also coming out of a drought – water deficits", 30],
  ["#ee9476", "0.6 - 0.8", "Moderate", "Damage to crops, pastures, drying of shallow reservoirs; voluntary water rationing", 30],
  ["#de0017", "0.6 - 0.4", "Severe", "Wider scale of loss of crops and pastures, imposed water rationing and livestock migration", 30],
  ["#9a0000", "< 0.4", "Extreme", "Major loss of crops and pasture, extreme fire danger, total water shortages, drying of deep reservoirs and usage", 29],
];

export default function App() {
  return (
    <Page>
      <Global />
      <Header>
        <Logo />
        <Nav>
          <Tab>Overview</Tab>
          <Tab $flip $active>Dashboard</Tab>
          <Tab>Comparison</Tab>
          <Tab $flip>Maps</Tab>
          <Tab>Help Center</Tab>
        </Nav>
        <Brand>
          <BrandSmall>UGANDA NATIONAL DROUGHT</BrandSmall>
          <BrandBig>MONITORING TOOL</BrandBig>
        </Brand>
        <Download>
          <Svg s={16} w={2.200}><path d="M12 2v13M7.500 10.500L12 15l4.500-4.500M2.500 15v4a2.500 2.500 0 0 0 2.500 2.500h14a2.500 2.500 0 0 0 2.500-2.500v-4" /></Svg>
        </Download>
      </Header>
      <Body>
        <Sidebar>
          <SideHead>
            <Funnel s={16} w={1.800} />
            <HeadText>Dashboard Filters</HeadText>
            <Collapse><Svg s={15} w={2.500}><path d="M15 5l-6.500 7L15 19" /></Svg></Collapse>
          </SideHead>
          <SideSub>Refine your analytics view</SideSub>
          <Section $top={25}><SectionIcon><Funnel s={12} w={2.200} /></SectionIcon><SectionText>Indicators</SectionText></Section>
          <Select $top={9}>CDI<Chevron /></Select>
          <Section $top={25}><SectionIcon><Clock /></SectionIcon><SectionText>Time Range</SectionText></Section>
          <FieldLabel $top={9}>Year</FieldLabel>
          <Select $top={4}>2024<Chevron /></Select>
          <FieldLabel $top={13}>Month</FieldLabel>
          <Select $top={4}>December<Chevron /></Select>
          <Section $top={25}><SectionIcon><Pin /></SectionIcon><SectionText>District</SectionText></Section>
          <Select $top={9}>Apac<Chevron /></Select>
          <Clear>Clear Filters</Clear>
        </Sidebar>
        <Main>
          <Toggle>
            <ToggleItem $on $w={96}>Map View</ToggleItem>
            <ToggleItem $w={94}>Table View</ToggleItem>
          </Toggle>
          <Title>Combined Drought Index (CDI)</Title>
          <Cards>
            <Card>
              <MapFrame>
                <MapArt />
                <Zoom>
                  <ZoomKey><svg width="10" height="10"><path d="M5 0v10M0 5h10" stroke="#000" strokeWidth="2" /></svg></ZoomKey>
                  <ZoomKey $off><svg width="10" height="10"><path d="M0 5h10" stroke="#bbb" strokeWidth="2" /></svg></ZoomKey>
                </Zoom>
              </MapFrame>
            </Card>
            <Card>
              <PanelTitle>APAC <Info /></PanelTitle>
              <ChartBox><Chart /></ChartBox>
              <Legend>
                <LegendHead>Legend <Info s={12} /></LegendHead>
                <TableWrap>
                  <Row $h={27}>
                    <HeadCell $first>COLOR</HeadCell><HeadCell>VALUE</HeadCell><HeadCell>TAG</HeadCell><HeadCell $end>DESCRIPTION</HeadCell>
                  </Row>
                  {rows.map(([c, v, t, d, h], i) => (
                    <Row key={v} $h={h} $last={i === 4}>
                      <Swatch $c={c} /><Cell $pad={12.5}>{v}</Cell><Cell>{t}</Cell><Cell $end>{d}</Cell>
                    </Row>
                  ))}
                  <Scroll>
                    <svg width="4" height="7"><path d="M4 0v7L0 3.500z" fill="#a3a3a3" /></svg>
                    <Thumb />
                    <svg width="4" height="7"><path d="M0 0v7l4-3.500z" fill="#505050" /></svg>
                  </Scroll>
                </TableWrap>
              </Legend>
            </Card>
          </Cards>
          <Timeline>December 2024<Range>2002 - 2022</Range></Timeline>
          <Track><Knob /></Track>
        </Main>
      </Body>
    </Page>
  );
}
